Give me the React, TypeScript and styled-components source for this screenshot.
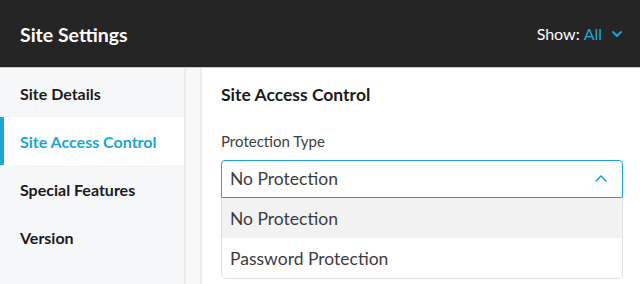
import styled, { createGlobalStyle } from "styled-components"

const GlobalStyle = createGlobalStyle`
    * { box-sizing: border-box; }
    html, body { margin: 0; padding: 0; background: #fff; }
    body { font-family: Lato, "Open Sans", sans-serif; }
`

const BLUE = "#1ba5d8"

const navItems = ["Site Details", "Site Access Control", "Special Features", "Version"]
const options = ["No Protection", "Password Protection"]

const ChevronDown = () => (
    <svg width="12" height="8" viewBox="0 0 12 8" fill="none">
        <path d="M2 2l4 4 4-4" stroke={BLUE} strokeWidth="2" strokeLinecap="round" strokeLinejoin="round" />
    </svg>
)

const ChevronUp = () => (
    <svg width="14" height="9" viewBox="0 0 14 9" fill="none">
        <path d="M2 7l5-5 5 5" stroke={BLUE} strokeWidth="1.6" strokeLinecap="round" strokeLinejoin="round" />
    </svg>
)

export default function App() {
    return (
        <>
            <GlobalStyle />
            <Page>
                <Header>
                    <Title>Site Settings</Title>
                    <ShowFilter>
                        Show: <ShowValue>All</ShowValue>
                        <ChevronDown />
                    </ShowFilter>
                </Header>
                <Body>
                    <Sidebar>
                        {navItems.map((item, i) => (
                            <NavItem key={item} $active={i === 1}>{item}</NavItem>
                        ))}
                    </Sidebar>
                    <Gutter />
                    <Content>
                        <SectionTitle>Site Access Control</SectionTitle>
                        <FieldLabel>Protection Type</FieldLabel>
                        <Select>
                            <SelectBox>
                                No Protection
                                <ChevronUp />
                            </SelectBox>
                            <Menu>
                                {options.map((opt, i) => (
                                    <Option key={opt} $hover={i === 0}>{opt}</Option>
                                ))}
                            </Menu>
                        </Select>
                    </Content>
                </Body>
            </Page>
        </>
    )
}

const Page = styled.div`
    width: 640px;
    height: 284px;
    display: flex;
    flex-direction: column;
    overflow: hidden;
`
const Header = styled.div`
    height: 68px;
    flex-shrink: 0;
    background-color: #252525;
    border-bottom: 1px solid #c9c9c9;
    display: flex;
    align-items: center;
    justify-content: space-between;
    padding: 0 17px 0 20px;
`
const Title = styled.div`
    color: #fff;
    font-size: 19.5px;
    font-weight: 700;
    margin-top: 1px;
`
const ShowFilter = styled.div`
    display: flex;
    align-items: center;
    gap: 4px;
    color: #fff;
    font-size: 16px;
    margin-top: -1px;
    svg { margin-left: 5px; margin-top: 1px; }
`
const ShowValue = styled.span`
    color: ${BLUE};
`
const Body = styled.div`
    flex: 1;
    display: flex;
    min-height: 0;
`
const Sidebar = styled.div`
    width: 184px;
    background-color: #f6f7f9;
    display: flex;
    flex-direction: column;
    padding-top: 1px;
`
const NavItem = styled.div<{ $active?: boolean }>`
    height: 48px;
    display: flex;
    align-items: center;
    font-size: 16px;
    font-weight: 700;
    color: ${p => (p.$active ? BLUE : "#1b1b1b")};
    background-color: ${p => (p.$active ? "#fff" : "transparent")};
    border-left: 4px solid ${p => (p.$active ? BLUE : "transparent")};
    padding-left: 16px;
`
const Gutter = styled.div`
    width: 18px;
    background-color: #f8f8f8;
    border-left: 2px solid #ececec;
    border-right: 2px solid #ececec;
`
const Content = styled.div`
    flex: 1;
    background: #fff;
    padding: 15px 17px 0 19px;
    display: flex;
    flex-direction: column;
`
const SectionTitle = styled.div`
    font-size: 17.5px;
    font-weight: 700;
    color: #1b1b1b;
    line-height: 24px;
`
const FieldLabel = styled.div`
    font-size: 15px;
    color: #3d3d3d;
    margin-top: 25px;
    line-height: 18px;
`
const Select = styled.div`
    margin-top: 10px;
    display: flex;
    flex-direction: column;
`
const SelectBox = styled.div`
    height: 38px;
    border: 1px solid ${BLUE};
    border-radius: 4px 4px 0 0;
    display: flex;
    align-items: center;
    justify-content: space-between;
    padding: 0 14px 1px 8px;
    font-size: 17.5px;
    color: #3d3d3d;
`
const Menu = styled.div`
    border: 1px solid #e0e0e0;
    border-top: 0;
    border-radius: 0 0 5px 5px;
    overflow: hidden;
`
const Option = styled.div<{ $hover?: boolean }>`
    height: 40px;
    display: flex;
    align-items: center;
    padding-left: 8px;
    font-size: 17.5px;
    color: #3d3d3d;
    background-color: ${p => (p.$hover ? "#f2f2f2" : "#fff")};
`
